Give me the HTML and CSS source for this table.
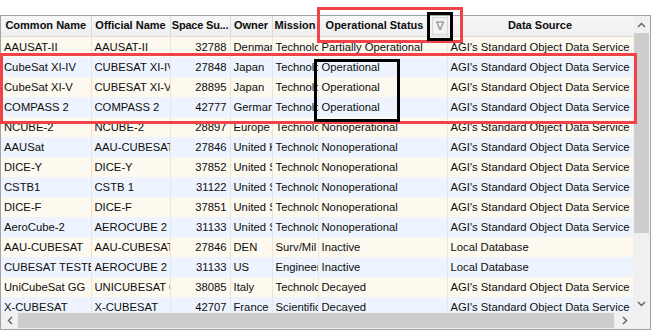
FILE: index.html
```html
<!DOCTYPE html>
<html lang="en">
<head>
    <meta charset="UTF-8">
    <title>Satellite Database</title>
    <link rel="stylesheet" href="styles.css">
</head>
<body>
    <div class="grid-frame">
        <!-- Data table -->
        <div class="table-area">
            <table class="sat-table">
                <colgroup>
                    <col class="c-common">
                    <col class="c-official">
                    <col class="c-ssc">
                    <col class="c-owner">
                    <col class="c-mission">
                    <col class="c-status">
                    <col class="c-source">
                </colgroup>
                <thead>
                    <tr>
                        <th>Common Name</th>
                        <th>Official Name</th>
                        <th class="tight">Space Su...</th>
                        <th>Owner</th>
                        <th>Mission</th>
                        <th class="with-filter"><span class="th-label">Operational Status</span><span class="filter-btn">&#8711;</span></th>
                        <th>Data Source</th>
                    </tr>
                </thead>
                <tbody>
                    <tr><td>AAUSAT-II</td><td>AAUSAT-II</td><td class="num">32788</td><td>Denmark</td><td>Technology</td><td>Partially Operational</td><td>AGI's Standard Object Data Service</td></tr>
                    <tr><td>CubeSat XI-IV</td><td>CUBESAT XI-IV</td><td class="num">27848</td><td>Japan</td><td>Technology</td><td>Operational</td><td>AGI's Standard Object Data Service</td></tr>
                    <tr><td>CubeSat XI-V</td><td>CUBESAT XI-V</td><td class="num">28895</td><td>Japan</td><td>Technology</td><td>Operational</td><td>AGI's Standard Object Data Service</td></tr>
                    <tr><td>COMPASS 2</td><td>COMPASS 2</td><td class="num">42777</td><td>Germany</td><td>Technology</td><td>Operational</td><td>AGI's Standard Object Data Service</td></tr>
                    <tr><td>NCUBE-2</td><td>NCUBE-2</td><td class="num">28897</td><td>Europe</td><td>Technology</td><td>Nonoperational</td><td>AGI's Standard Object Data Service</td></tr>
                    <tr><td>AAUSat</td><td>AAU-CUBESAT</td><td class="num">27846</td><td>United Kingdom</td><td>Technology</td><td>Nonoperational</td><td>AGI's Standard Object Data Service</td></tr>
                    <tr><td>DICE-Y</td><td>DICE-Y</td><td class="num">37852</td><td>United States</td><td>Technology</td><td>Nonoperational</td><td>AGI's Standard Object Data Service</td></tr>
                    <tr><td>CSTB1</td><td>CSTB 1</td><td class="num">31122</td><td>United States</td><td>Technology</td><td>Nonoperational</td><td>AGI's Standard Object Data Service</td></tr>
                    <tr><td>DICE-F</td><td>DICE-F</td><td class="num">37851</td><td>United States</td><td>Technology</td><td>Nonoperational</td><td>AGI's Standard Object Data Service</td></tr>
                    <tr><td>AeroCube-2</td><td>AEROCUBE 2</td><td class="num">31133</td><td>United States</td><td>Technology</td><td>Nonoperational</td><td>AGI's Standard Object Data Service</td></tr>
                    <tr><td>AAU-CUBESAT</td><td>AAU-CUBESAT</td><td class="num">27846</td><td>DEN</td><td>Surv/Mil</td><td>Inactive</td><td>Local Database</td></tr>
                    <tr><td>CUBESAT TESTBED</td><td>AEROCUBE 2</td><td class="num">31133</td><td>US</td><td>Engineering</td><td>Inactive</td><td>Local Database</td></tr>
                    <tr><td>UniCubeSat GG</td><td>UNICUBESAT GG</td><td class="num">38085</td><td>Italy</td><td>Technology</td><td>Decayed</td><td>AGI's Standard Object Data Service</td></tr>
                    <tr><td>X-CUBESAT</td><td>X-CUBESAT</td><td class="num">42707</td><td>France</td><td>Scientific</td><td>Decayed</td><td>AGI's Standard Object Data Service</td></tr>
                </tbody>
            </table>
        </div>

        <!-- Vertical scrollbar -->
        <div class="vscroll">
            <span class="sb-arrow"><svg width="9" height="6" viewBox="0 0 9 6"><path d="M1 5 L4.5 1.5 L8 5" fill="none" stroke="#606060" stroke-width="1.4"/></svg></span>
            <div class="sb-track-v"><div class="sb-thumb-v"></div></div>
            <span class="sb-arrow"><svg width="9" height="6" viewBox="0 0 9 6"><path d="M1 1 L4.5 4.5 L8 1" fill="none" stroke="#606060" stroke-width="1.4"/></svg></span>
        </div>

        <!-- Horizontal scrollbar -->
        <div class="hscroll">
            <span class="sb-arrow"><svg width="6" height="9" viewBox="0 0 6 9"><path d="M5 1 L1.5 4.5 L5 8" fill="none" stroke="#606060" stroke-width="1.4"/></svg></span>
            <div class="sb-track-h"><div class="sb-thumb-h"></div></div>
            <span class="sb-arrow"><svg width="6" height="9" viewBox="0 0 6 9"><path d="M1 1 L4.5 4.5 L1 8" fill="none" stroke="#606060" stroke-width="1.4"/></svg></span>
        </div>
        <div class="sb-corner"></div>
    </div>

    <!-- Annotation boxes drawn over the grid -->
    <div class="mark red mark-header"></div>
    <div class="mark black mark-filter"></div>
    <div class="mark red mark-rows"></div>
    <div class="mark black mark-status"></div>
</body>
</html>
```

FILE: styles.css
```css
/* Page */
body {
    margin: 0;
    background-color: #ffffff;
    font-family: 'Liberation Sans', Arial, sans-serif;
    font-size: 11.25px;
    color: #0d0d0d;
    position: relative;
    width: 651px;
    height: 330px;
    overflow: hidden;
}

/* Grid frame with scrollbars */
.grid-frame {
    margin-top: 15px;
    width: 649px;
    height: 313px;
    border: 1px solid #a3a3a3;
    display: grid;
    grid-template-columns: 632px 17px;
    grid-template-rows: 296px 17px;
}

.table-area {
    overflow: hidden;
    background-color: #ffffff;
}

/* Table */
.sat-table {
    table-layout: fixed;
    border-collapse: collapse;
    width: 632px;
}

.c-common { width: 90px; }
.c-official { width: 79px; }
.c-ssc { width: 60px; }
.c-owner { width: 42px; }
.c-mission { width: 46px; }
.c-status { width: 129px; }
.c-source { width: 186px; }

.sat-table th {
    height: 20px;
    padding: 0 2px;
    box-sizing: border-box;
    background: linear-gradient(#f7f7f7, #efefef);
    border-right: 1px solid #d9d9d9;
    border-bottom: 1px solid #dcdcdc;
    font-size: 11px;
    font-weight: bold;
    text-align: center;
    white-space: nowrap;
    overflow: hidden;
    line-height: 19px;
}

.sat-table th.tight {
    padding: 0;
    letter-spacing: -0.2px;
}

.sat-table th.with-filter {
    padding-right: 0;
}

.with-filter .th-label {
    display: inline-block;
    width: 108px;
    text-align: center;
}

.filter-btn {
    display: inline-block;
    width: 14px;
    height: 16px;
    margin-left: 3px;
    vertical-align: middle;
    border: 1px solid #d6d6d6;
    background-color: #f2f2f2;
    color: #8a8a8a;
    font-weight: normal;
    font-size: 12px;
    line-height: 16px;
}

.sat-table td {
    height: 20px;
    padding: 0 3px;
    box-sizing: border-box;
    line-height: 20px;
    white-space: nowrap;
    overflow: hidden;
    border-right: 1px solid #ebe6dc;
}

.sat-table td.num {
    text-align: right;
}

.sat-table tbody tr:nth-child(odd) {
    background-color: #fdf9ef;
}

.sat-table tbody tr:nth-child(even) {
    background-color: #edf4fd;
}

.sat-table tbody tr:nth-child(even) td {
    border-right-color: #e2e8f0;
}

/* Scrollbars */
.vscroll {
    display: flex;
    flex-direction: column;
    background-color: #f0f0f0;
}

.hscroll {
    display: flex;
    background-color: #f0f0f0;
}

.sb-arrow {
    width: 17px;
    height: 17px;
    flex: none;
    display: flex;
    align-items: center;
    justify-content: center;
}

.sb-track-v {
    flex: 1;
    padding: 0 1px;
}

.sb-thumb-v {
    height: 200px;
    background-color: #cdcdcd;
}

.sb-track-h {
    flex: 1;
    padding: 1px 0;
}

.sb-thumb-h {
    width: 596px;
    height: 15px;
    background-color: #cdcdcd;
}

.sb-corner {
    background-color: #f0f0f0;
}

/* Annotation marks */
.mark {
    position: absolute;
    box-sizing: border-box;
    border: 3px solid;
}

.mark.red { border-color: #ef4249; }
.mark.black { border-color: #000000; }

.mark-header { left: 317px; top: 7px; width: 146px; height: 36px; }
.mark-filter { left: 427px; top: 12px; width: 26px; height: 29px; }
.mark-rows { left: 0; top: 53px; width: 637px; height: 71px; }
.mark-status { left: 314px; top: 59px; width: 86px; height: 63px; }
```
